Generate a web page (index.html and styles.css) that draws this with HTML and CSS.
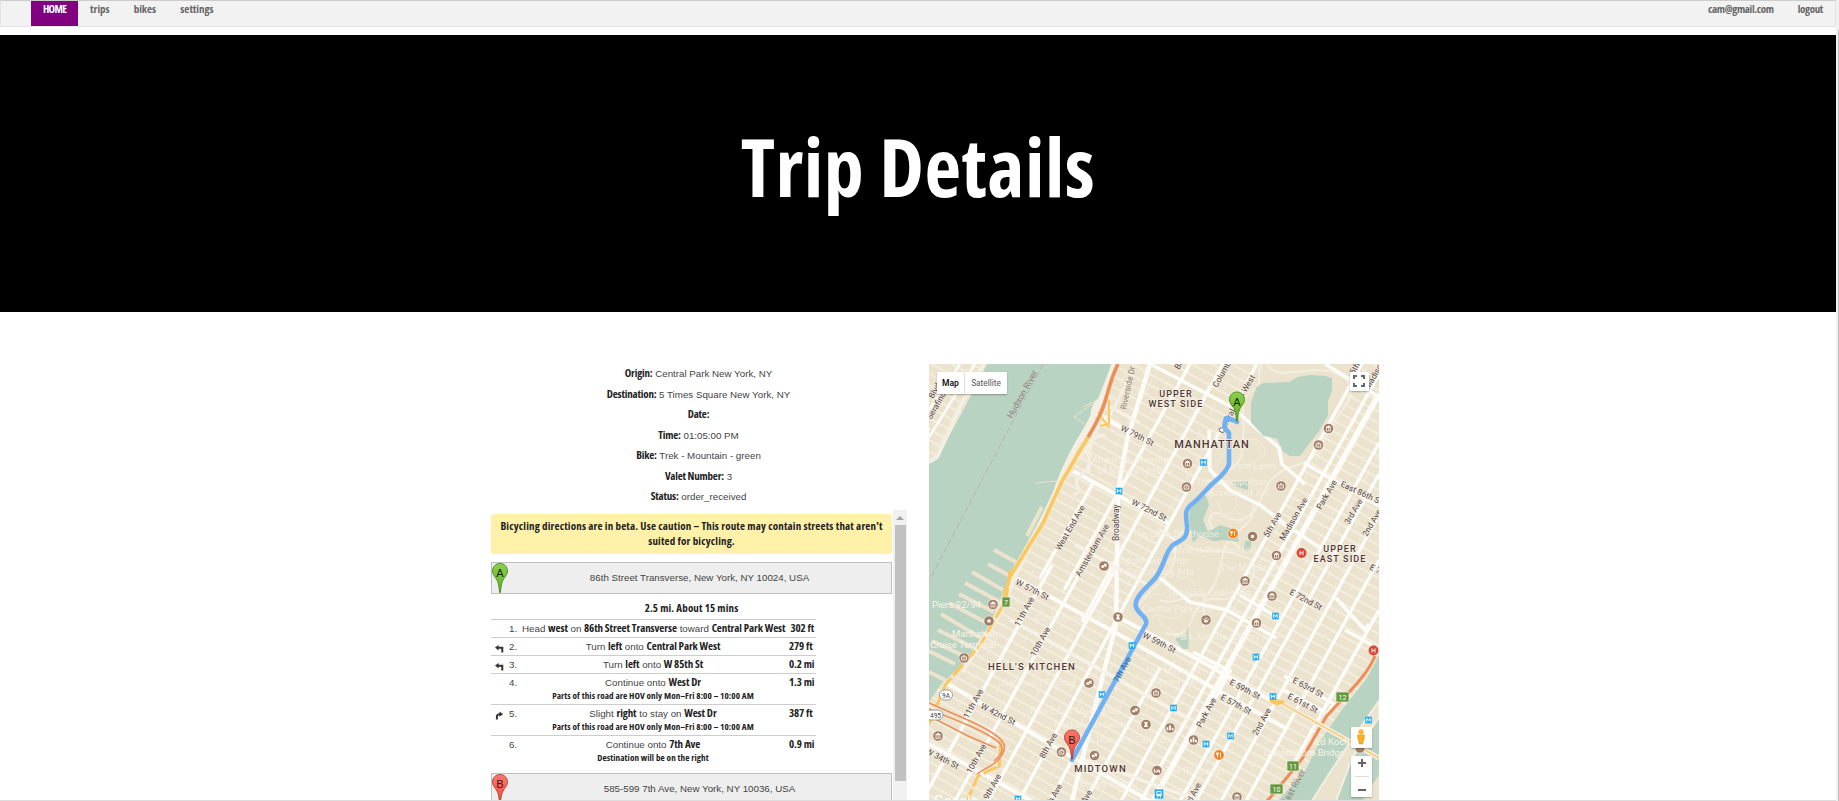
FILE: index.html
```html
<!DOCTYPE html>
<html lang="en">
<head>
<meta charset="utf-8">
<title>Trip Details</title>
<link rel="stylesheet" href="styles.css">
</head>
<body>
<div class="page">
  <nav class="nav">
    <a class="home">HOME</a><a>trips</a><a>bikes</a><a>settings</a>
    <span class="grow"></span><a class="user">cam@gmail.com</a><a class="user">logout</a>
  </nav>
  <header class="hero"><h1>Trip Details</h1></header>
  <main class="main">
    <section class="info">
      <div class="facts">
        <p><b>Origin:</b> Central Park New York, NY</p>
        <p><b>Destination:</b> 5 Times Square New York, NY</p>
        <p><b>Date:</b></p>
        <p><b>Time:</b> 01:05:00 PM</p>
        <p><b>Bike:</b> Trek - Mountain - green</p>
        <p><b>Valet Number:</b> 3</p>
        <p><b>Status:</b> order_received</p>
      </div>
      <div class="scroller">
        <div class="directions">
          <div class="warn">Bicycling directions are in beta. Use caution – This route may contain streets that aren't<br>suited for bicycling.</div>
          <div class="place"><svg class="pin" viewBox="0 0 16 30"><use href="#pinGreen"/><text x="8" y="13.5">A</text></svg><span>86th Street Transverse, New York, NY 10024, USA</span></div>
          <div class="summary">2.5 mi. About 15 mins</div>
          <div class="steps">
            <div class="step"><i></i><em>1.</em><div>Head <b>west</b> on <b>86th Street Transverse</b> toward <b>Central Park West</b></div><b class="dist">302 ft</b></div>
            <div class="step"><i><svg viewBox="0 0 10 9"><use href="#left"/></svg></i><em>2.</em><div>Turn <b>left</b> onto <b>Central Park West</b></div><b class="dist">279 ft</b></div>
            <div class="step"><i><svg viewBox="0 0 10 9"><use href="#left"/></svg></i><em>3.</em><div>Turn <b>left</b> onto <b>W 85th St</b></div><b class="dist">0.2 mi</b></div>
            <div class="step tall"><i></i><em>4.</em><div>Continue onto <b>West Dr</b><small>Parts of this road are HOV only Mon–Fri 8:00 – 10:00 AM</small></div><b class="dist">1.3 mi</b></div>
            <div class="step tall"><i><svg viewBox="0 0 10 9"><use href="#slight"/></svg></i><em>5.</em><div>Slight <b>right</b> to stay on <b>West Dr</b><small>Parts of this road are HOV only Mon–Fri 8:00 – 10:00 AM</small></div><b class="dist">387 ft</b></div>
            <div class="step tall"><i></i><em>6.</em><div>Continue onto <b>7th Ave</b><small>Destination will be on the right</small></div><b class="dist">0.9 mi</b></div>
          </div>
          <div class="place"><svg class="pin" viewBox="0 0 16 30"><use href="#pinRed"/><text x="8" y="13.5">B</text></svg><span>585-599 7th Ave, New York, NY 10036, USA</span></div>
        </div>
        <div class="bar"><span class="arrow"></span><span class="thumb"></span></div>
      </div>
    </section>
    <section class="map">
<svg class="canvas" viewBox="929 364 450 437">
<defs>
  <linearGradient id="gg" x2="0" y2="1"><stop offset="0" stop-color="#8ad04c"/><stop offset="1" stop-color="#5fae20"/></linearGradient>
  <linearGradient id="gr" x2="0" y2="1"><stop offset="0" stop-color="#ff776b"/><stop offset="1" stop-color="#f04a3c"/></linearGradient>
  <path id="pinGreen" d="M8 .5C3.700 .5.5 3.700.5 8c0 2.500 1.200 4.300 2.900 6.600C5.700 17.700 7 21 7.500 29.500h1C9 21 10.300 17.700 12.600 14.600 14.300 12.300 15.500 10.500 15.500 8c0-4.300-3.200-7.500-7.500-7.500z" fill="url(#gg)" stroke="#3f7d1a" stroke-width=".8"/>
  <path id="pinRed" d="M8 .5C3.700 .5.5 3.700.5 8c0 2.500 1.200 4.300 2.900 6.600C5.700 17.700 7 21 7.500 29.500h1C9 21 10.300 17.700 12.600 14.600 14.300 12.300 15.500 10.500 15.500 8c0-4.300-3.200-7.500-7.500-7.500z" fill="url(#gr)" stroke="#a4352b" stroke-width=".8"/>
  <path id="left" d="M0 3.500 4 .5v2h5.200V9H7V4.700H4v2z" fill="#333"/>
  <path id="slight" d="M1 9V6C1 3.500 2.500 2 5 2V0L9 3 5 6V4.200C3.800 4.200 3.200 5 3.200 6.300V9z" fill="#333"/>
  <pattern id="grid" width="32" height="9.700" patternUnits="userSpaceOnUse" patternTransform="translate(1118 617) rotate(29)">
    <path d="M0 4.800H32" stroke="#f6f1e4" stroke-width="1.600"/>
  </pattern>
  <pattern id="blocks" width="26" height="29" patternUnits="userSpaceOnUse" patternTransform="translate(1118 617) rotate(29)">
    <path d="M8 0V9.700M19 9.700V29" stroke="#f3eddf" stroke-width="1"/>
  </pattern>
  <g id="poi"><circle r="5.400" fill="#fff" opacity=".75"/><circle r="4.800" fill="#a27e66"/></g>
  <g id="museum"><use href="#poi"/><path d="M-2.500-1 0-2.700 2.500-1zM-2-.4v2.500M0-.4v2.500M2-.4v2.500M-2.600 2.400h5.200" fill="#fff" stroke="#fff" stroke-width=".7"/></g>
  <g id="cam"><use href="#poi"/><path d="M-2.400-1.200h4.800v3.300h-4.800zM-1-2.200h2" fill="none" stroke="#fff" stroke-width=".9"/><circle cy=".5" r=".6" fill="#fff"/></g>
  <g id="masks"><use href="#poi"/><path d="M-2.600-.8H.2v2.600h-2.800zM-.2-2.200H2.600V.8H.8" fill="#fff"/></g>
  <g id="dot"><use href="#poi"/><rect x="-1.600" y="-1.600" width="3.200" height="3.200" rx="1" fill="#fff"/></g>
  <g id="paw"><use href="#poi"/><ellipse cy="1.200" rx="1.800" ry="1.400" fill="#fff"/><path d="M-2.200-.6h.1M-.8-1.800h.1M.8-1.800h.1M2.200-.6h.1" stroke="#fff" stroke-width="1.200" stroke-linecap="round"/></g>
  <g id="city"><use href="#poi"/><path d="M-2.500 2.300v-3M0 2.300v-5M2.500 2.300V-.2" stroke="#fff" stroke-width="1.700"/></g>
  <g id="bed"><use href="#poi"/><path d="M-2.600-1.800v4M-2.600 1.200h5.200M2.600-.3v2.500M-.5-.3h3" fill="none" stroke="#fff" stroke-width="1.100"/></g>
  <g id="tower"><use href="#poi"/><path d="M-2 2.500h4L1-.5 2-2.500h-4l1 2z" fill="#fff"/></g>
  <g id="metro"><rect x="-3.300" y="-3.300" width="6.600" height="6.600" fill="#1eaaf1"/><path d="M-1.700 2v-3.700L0 .5l1.700-2.200V2" fill="none" stroke="#fff" stroke-width=".9"/></g>
  <g id="bus"><rect x="-4.300" y="-4.600" width="8.600" height="9.200" fill="#1eaaf1"/><rect x="-2.600" y="-3" width="5.200" height="5.200" rx=".8" fill="#fff"/><path d="M-1.700-1.900h3.400v1.800h-3.400z" fill="#1eaaf1"/><path d="M-2 3.200h1M1 3.200h1" stroke="#fff"/></g>
  <g id="food"><circle r="5.400" fill="#fff"/><circle r="4.900" fill="#f58220"/><path d="M-1.500-2.500v5M-2.500-2.500V-.5h2v-2M1.500 2.500v-5" fill="none" stroke="#fff" stroke-width=".8"/></g>
  <g id="hosp"><circle r="4.900" fill="#db4437"/><path d="M-1.500-2.200v4.400M1.500-2.200v4.400M-1.500 0h3" stroke="#fff" stroke-width=".9"/></g>
</defs>
<rect x="929" y="364" width="450" height="437" fill="#ebe3cd"/>
<rect x="929" y="364" width="450" height="437" fill="url(#grid)"/>
<rect x="929" y="364" width="450" height="437" fill="url(#blocks)"/>
<!-- central park -->
<path d="M1120 617 1256 364H1365L1201 657z" fill="#ebe3cd"/>
<g fill="none" stroke="#f4eee1" stroke-width="2">
  <path d="M1261 364c-5 12 4 20-10 28s-5 30-8 45 3 18-10 30-25 18-30 35-30 30-28 50-20 32-35 52"/>
  <path d="M1268 364c8 20 45-2 70 10s8 30-2 45-18 40-32 44-30 8-38 25-10 20-15 30-25 20-28 35-5 30-15 40 0 20-5 35"/>
  <path d="M1186 545c15 10 30 4 46 8s24 6 22 20-22 28-34 26-22 4-28 20-14 18-26 14"/>
  <path d="M1205 480c20 0 25 15 40 18s8 20-5 22-25-15-30-2 20 20 30 30M1160 600c20 8 35-15 48 0"/>
</g>
<path d="M1150 596c15-8 20 10 28-2s12 8 4 20-25-5-30 4M1210 490c20-8 35 12 22 22s-20 0-25 14M1202 440c12-10 35-4 25 10s-20 18-14 28M1170 570c8 12 20 4 24 14s-8 14-14 8M1215 500c8 6 2 12 12 14s6 12 16 8M1155 610c8 8 2 16 12 18s4 10 12 8M1243 440c14 0 22 10 14 20s-20 6-14-20M1250 440c8-4 20 8 12 18" fill="none" stroke="#f3ecdd" stroke-width="1"/>
<!-- main streets -->
<g fill="none" stroke="#fefcf8" stroke-width="3.400">
  <path d="M922 801 1052 565M955 801 1085 564M988 801 1118 564"/>
  <path d="M922 708 950 656M1040 578 1094 481M1064 590 1190 364"/>
  <path d="M1019 801 1118 617 1257 364M1082 622 1223 364M1050 801 1146 622M1085 801 1160 668"/>
  <path d="M1121 801 1379 333M1141 801 1379 374M1180 801 1379 443M1196 801 1379 474M1221 801 1379 515M1246 801 1379 560M1290 770 1379 610"/>
  <path d="M1153 801 1379 394" stroke-width="5.500"/>
  <path d="M1150 364 1127 440 1118 490 1116 625 1103 675 1072 801" stroke-width="4.500"/>
  <path d="M929 744 1032 801M948 684 1072 757 1150 801M1012 576 1118 634 1213 688 1285 728M1118 617 1195 658 1276 703M1073 471 1170 524M1092 411 1150 444" stroke-width="4.200"/>
  <path d="M1150 364 1230 406 1270 440 1279 448 1282 464 1305 484M1209 430 1210 470 1230 490 1260 505 1285 524 1320 548M1325 364 1379 397M1304 463 1379 506M1160 578 1190 602 1227 610 1276 638M1240 595 1280 619M1336 598 1365 630 1369 624M1345 630 1372 645" stroke-width="3.600"/>
  <path d="M1284 676 1334 704 1327 714M1284 690 1325 712M1193 652 1230 671 1205 718" stroke-width="3.600"/>
  <path d="M1075 545 1150 586M1010 620 1190 720M1060 380 1140 423M1085 760 1200 801M1160 530 1180 543" stroke="#f7f3e8" stroke-width="3"/>
</g>
<!-- water -->
<path d="M987 364H1117L1083 430 1060 475 1045 510 1014 566 1000 600 985 635 965 662 941 684 929 702V462L940 453 965 407z" fill="#b9d3c2"/>
<g stroke="#ebe3cd" stroke-width="4" fill="none">
  <path d="M1042 507 1027 536M1016 562 994 550M1010 576 988 564M1003 590 972 572M1000 602 965 583M994 612 959 594M985 622 949 603M981 638 941 614M974 648 938 630M966 657 932 641M955 664 929 651M945 680 929 672"/>
  <path d="M1057 481 1035 483M1092 404 1074 417 1084 424M1098 400 1082 407" stroke-width="1"/>
</g>
<path d="M984 364 961 405 937 457 929 462" fill="none" stroke="#f4efe3" stroke-width="4"/>
<path d="M975 364 929 437M960 364 929 410" fill="none" stroke="#fefcf8" stroke-width="2.500"/>
<path d="M1257 388 1263 384 1289 383 1298 378 1310 376 1325 377 1331 379 1331 391 1327 401 1327 415 1318 431 1304 449 1299 455 1290 455 1284 451 1278 438 1264 435 1252 422 1252 403z" fill="#b9d3c2" stroke="#b9d3c2" stroke-width="2" stroke-linejoin="round"/>
<path d="M1191 504 1206 495 1209 505 1203 520 1208 532 1220 525 1236 530 1239 542 1225 540 1213 541 1200 535 1193 543 1189 520 1190 505zM1232 482 1248 481 1248 490 1237 487zM1245 541 1252 540 1250 550 1244 551zM1174 638 1186 636 1187 625 1189 637 1188 649 1183 649z" fill="#b9d3c2"/>
<path d="M1379 655 1367 678 1341 711 1319 743 1305 771 1278 801H1379z" fill="#b9d3c2"/>
<path d="M1379 717 1352 758 1336 801H1312L1327 777 1355 735 1379 701z" fill="#ebe3cd" stroke="#f4efe3" stroke-width="2"/>
<path d="M1379 775 1362 801H1379z" fill="#ebe3cd"/>
<path d="M1114 364C1102 397 1095 415 1083 434S1060 478 1055 494L1015 576 999 614 962 672" stroke="#f4efe3" stroke-width="5" fill="none"/>
<path d="M1098 400c-12 14 0 22-12 35s15 22-3 38 8 14-10 22M1105 435c-18 0-20 30-34 22M1129 379c-15 24-14 34-26 44-15 12-13 32-14 50" stroke="#f4efe3" stroke-width="3" fill="none"/>
<path d="M1088 437 1062 481 1043 523 1010 577 1003 600" stroke="#fbc75f" stroke-width="3.600" fill="none"/>
<path d="M1098 412 1109 428M1109 400V424L1100 426" stroke="#fbc75f" stroke-width="2" fill="none"/>
<path d="M1118 364C1105 390 1110 402 1088 437" stroke="#ed8d58" stroke-width="3.600" fill="none"/>
<path d="M1010 570 1006 600 980 645 946 684 929 724M997 767 978 776 967 801M1001 740 999 768" stroke="#fbc75f" stroke-width="3" stroke-dasharray="15 3" fill="none"/>
<g fill="none" stroke="#ed8d58" stroke-width="1.500"><path d="M929 703 970 721C1007 738 1012 747 996 762 989 768 982 770 977 774M929 709 970 726C1005 742 1009 748 994 761M929 716 968 736 996 748"/></g>
<path d="M1375 656C1365 680 1340 700 1326 717L1302 759 1275 792 1267 801" stroke="#ed8d58" stroke-width="3" fill="none"/>
<path d="M1276 700 1379 758" stroke="#f3ecdd" stroke-width="5"/><path d="M1276 700 1379 758" stroke="#fbc75f" stroke-width="1.300"/>
<path d="M1270 700 1284 702 1276 704z" stroke="#fbc75f" stroke-width="3" fill="#fbc75f"/>
<path d="M1043 364 929 581" stroke="#b3aaa9" stroke-width=".8" stroke-dasharray="6 3"/>
<!-- faint labels -->
<g class="faint">
  <text x="932" y="608" class="w">Piers 92/94</text><text x="952" y="637" class="w">Manhattan</text><text x="930" y="648" class="w">Cruise Terminal</text>
  <text x="1092" y="463">American Museum</text><text x="1098" y="474">of Natural History</text><text x="1228" y="469">Great Lawn</text><text x="1196" y="485">The Metropolitan</text><text x="1205" y="496">Museum of Art</text><text x="1132" y="537">The Loeb Boathouse</text><text x="1172" y="553">Alice in Wonderland</text><text x="1113" y="564">Lincoln Center for</text><text x="1111" y="575">the Performing Arts</text><text x="1220" y="571">The Met Breuer</text><text x="1167" y="596">The Frick Collection</text><text x="1142" y="612">Central Park Zoo</text><text x="1174" y="640">Park Avenue Armory</text><text x="1035" y="621">Columbus Circle</text><text x="1002" y="686">Gershwin Theatre</text><text x="1030" y="714">Radio City Music Hall</text><text x="1054" y="728">Rockefeller Center</text><text x="1083" y="743">St. Patrick's Cathedral</text><text x="1080" y="787">Bryant Park</text><text x="1145" y="674">The Museum</text><text x="1143" y="685">of Modern Art</text><text x="1165" y="774">The Roosevelt</text><text x="1315" y="745" class="w">Ed Koch</text><text x="1264" y="756" class="w">Queensboro Bridge</text><text x="934" y="806" class="google">Google</text>
</g>
<!-- stations and places -->
<use href="#metro" x="1119" y="491"/><use href="#metro" x="1203.500" y="462.500"/><use href="#metro" x="1102" y="694.500"/><use href="#metro" x="1275.500" y="616"/><use href="#metro" x="1256" y="657"/><use href="#metro" x="1273" y="696.500"/><use href="#metro" x="1173.500" y="708"/><use href="#metro" x="1230.500" y="736"/><use href="#metro" x="1206" y="744"/><use href="#metro" x="1368.500" y="720"/><use href="#metro" x="1018" y="799"/><use href="#bus" x="1159" y="794"/>
<use href="#masks" x="1104" y="566"/><use href="#museum" x="1187.500" y="463.500"/><use href="#cam" x="1186.500" y="487"/><use href="#museum" x="1328.500" y="428.500"/><use href="#cam" x="1318.500" y="445"/><use href="#cam" x="1281" y="486"/><use href="#museum" x="1276.500" y="555.500"/><use href="#dot" x="1252.500" y="536.500"/><use href="#museum" x="1245" y="581"/><use href="#museum" x="1272" y="596"/><use href="#museum" x="1256.500" y="623"/><use href="#paw" x="1206" y="620"/><use href="#museum" x="993" y="604.500"/><use href="#dot" x="989" y="621"/><use href="#cam" x="964" y="658"/><use href="#tower" x="1118" y="617"/><use href="#masks" x="1089" y="683"/><use href="#cam" x="1156" y="693"/><use href="#masks" x="1135" y="710.500"/><use href="#tower" x="1146" y="724.500"/><use href="#city" x="1170" y="728"/><use href="#city" x="1193.500" y="740"/><use href="#cam" x="1061.500" y="752"/><use href="#masks" x="1094.500" y="755.500"/><use href="#bed" x="1157" y="770.500"/><use href="#museum" x="1237" y="797"/><use href="#museum" x="938" y="736"/><use href="#poi" x="1360" y="748"/>
<use href="#food" x="1233" y="533.500"/><use href="#food" x="1219" y="755"/><use href="#hosp" x="1301.500" y="553"/><use href="#hosp" x="1373.500" y="650.500"/>
<g class="exit"><rect x="1002" y="597" width="8" height="10"/><text x="1006" y="605">7</text><rect x="1336" y="692" width="13" height="10"/><text x="1342.500" y="700">12</text><rect x="1287" y="761" width="12" height="10"/><text x="1293" y="769">11</text><rect x="1270" y="784" width="13" height="10"/><text x="1276.500" y="792">10</text></g>
<g class="shield"><rect x="939.500" y="690" width="13" height="10" rx="5"/><text x="946" y="697.500">9A</text><rect x="926" y="710" width="17" height="10" rx="5"/><text x="935.500" y="717.500">495</text></g>
<g class="street">
  <text transform="translate(1120 430) rotate(27)">W 79th St</text><text transform="translate(1131 504) rotate(27)">W 72nd St</text><text transform="translate(1015 584) rotate(27)">W 57th St</text><text transform="translate(1142 637) rotate(27)">W 59th St</text><text transform="translate(980 708) rotate(27)">W 42nd St</text><text transform="translate(925 753) rotate(27)">W 34th St</text>
  <text transform="translate(1289 594) rotate(28)">E 72nd St</text><text transform="translate(1292 682) rotate(28)">E 63rd St</text><text transform="translate(1287 698) rotate(28)">E 61st St</text><text transform="translate(1229 684) rotate(28)">E 59th St</text><text transform="translate(1220 699) rotate(28)">E 57th St</text><text transform="translate(1340 486) rotate(25)">East 86th St</text><text transform="translate(1369 569) rotate(27)">E 75th St</text>
  <text transform="translate(1060 551) rotate(-60)">West End Ave</text><text transform="translate(1080 577) rotate(-60)">Amsterdam Ave</text><text transform="translate(1119 541) rotate(-90)">Broadway</text>
  <text transform="translate(1019 627) rotate(-61)">11th Ave</text><text transform="translate(968 719) rotate(-61)">11th Ave</text><text transform="translate(1035 657) rotate(-61)">10th Ave</text><text transform="translate(971 774) rotate(-61)">10th Ave</text><text transform="translate(988 800) rotate(-61)">9th Ave</text><text transform="translate(1044 759) rotate(-61)">8th Ave</text><text transform="translate(1049 810) rotate(-61)">7th Ave</text><text transform="translate(1079 816) rotate(-61)">6th Ave</text>
  <text transform="translate(1268 538) rotate(-60)">5th Ave</text><text transform="translate(1284 541) rotate(-60)">Madison Ave</text><text transform="translate(1321 510) rotate(-60)">Park Ave</text><text transform="translate(1349 525) rotate(-60)">3rd Ave</text><text transform="translate(1367 537) rotate(-60)">2nd Ave</text><text transform="translate(1201 728) rotate(-61)">Park Ave</text><text transform="translate(1257 736) rotate(-61)">2nd Ave</text><text transform="translate(1188 809) rotate(-61)">3rd Ave</text>
  <text transform="translate(1217 388) rotate(-60)">Columbus Ave</text><text transform="translate(1179 370) rotate(-60)">Broadway</text><text transform="translate(1223 434) rotate(-62)">Central Park</text><text transform="translate(1246 393) rotate(-60)">West</text><text transform="translate(1126 410) rotate(-78)" class="minor">Riverside Dr</text><text transform="translate(1012 419) rotate(-61)" class="minor river">Hudson River</text><text transform="translate(1287 806) rotate(-62)" class="minor river">East River</text><text transform="translate(1354 375) rotate(-60)">5th Ave</text><text transform="translate(1369 390) rotate(-60)">Madison Ave</text><text transform="translate(933 399) rotate(-60)">Blvd E</text><text transform="translate(931 420) rotate(-60)">Serafino</text>
</g>
<!-- route -->
<path d="M1237 422 1233 420 1226 418 1224 427 1229 433 1229 464C1227 473 1216 480 1211 485S1200 498 1192 504 1186 515 1187 526C1188 540 1180 540 1173 545S1165 564 1156 577C1150 585 1133 597 1136 607 1138 614 1148 617 1146 624L1072 760" fill="none" stroke="#70b1f4" stroke-width="4.600" stroke-linejoin="round" stroke-linecap="round"/>
<use href="#metro" x="1132" y="645.500"/>
<g class="street over"><text transform="translate(1118 683) rotate(-61)">7th Ave</text></g>
<g class="district"><text x="1176" y="396.500">UPPER</text><text x="1176" y="406.500">WEST SIDE</text><text x="1340" y="552">UPPER</text><text x="1340" y="561.500">EAST SIDE</text><text x="1212" y="447.500" class="big">MANHATTAN</text><text x="1032" y="670" class="mid">HELL'S KITCHEN</text><text x="1100.500" y="772" class="mid">MIDTOWN</text></g>
<g class="pins"><use href="#pinGreen" x="1229" y="391.500"/><text x="1237" y="405.500">A</text><use href="#pinRed" x="1064" y="729.500"/><text x="1072" y="743.500">B</text></g>
</svg>
      <div class="types"><b>Map</b><span>Satellite</span></div>
      <div class="full"><svg viewBox="0 0 12 12"><path d="M1 4V1h3M8 1h3v3M11 8v3H8M4 11H1V8" fill="none" stroke="#666" stroke-width="2"/></svg></div>
      <div class="man"><svg viewBox="0 0 12 18"><circle cx="6" cy="4" r="2.700" fill="#fbb72f"/><path d="M2.500 7h7l-.5 5H8.300L8 16H4l-.3-4H3z" fill="#f8b026" stroke="#d8931b" stroke-width=".5"/></svg></div>
      <div class="zoom"><span class="plus"></span><hr><span class="minus"></span></div>
    </section>
  </main>
  <div class="edge"></div>
  <div class="pagebar"></div>
</div>
</body>
</html>
```
FILE: styles.css
```css
* { box-sizing: border-box; }
body { margin: 0; background: #fff; overflow: hidden; font: 9.75px/13px "Liberation Sans", Arial, sans-serif; color: #444; }
.page { position: relative; height: 801px; width: 1839px; overflow: hidden; }
b, .nav, h1, .warn, .summary, small { font-family: "Liberation Sans Narrow", "Open Sans", sans-serif; font-stretch: 75%; font-weight: 700; }
.nav { display: flex; width: 1836px; height: 27px; padding-left: 30px; background: #f2f2f2; border: 1px solid #e4e4e4; border-top-color: #ccc; color: #666; font-size: 11px; }
.nav a { padding: 1px 12px 0; height: 25px; }
.nav .home { background: #800080; color: #fff; letter-spacing: -.75px; }
.nav .user { letter-spacing: -.35px; }
.grow { flex: 1; }
.hero { margin-top: 8px; width: 1836px; height: 277px; padding-bottom: 15px; background: #000; color: #fff; display: flex; justify-content: center; align-items: center; }
h1 { margin: 0; font-size: 80px; line-height: 100px; letter-spacing: .5px; }
.main { display: flex; width: 1836px; padding-left: 491px; }
.info { width: 416px; margin-right: 22px; }
.facts { padding-top: 51px; height: 198px; text-align: center; }
.facts p { margin: 0; padding-right: 1px; height: 20.500px; line-height: 20.500px; }
.facts b { font-size: 11px; color: #222; letter-spacing: -.2px; }
.scroller { display: flex; height: 291px; overflow: hidden; }
.directions { width: 401px; padding-top: 4px; margin-right: 1px; }
.warn { height: 40px; padding-top: 4px; background: #fff1a8; border-radius: 2px; text-align: center; color: #222; font-size: 11px; line-height: 15px; letter-spacing: .16px; white-space: nowrap; }
.place { display: flex; height: 32px; margin-top: 8px; background: #eee; border: 1px solid #c0c0c0; align-items: center; }
.place span { flex: 1; text-align: center; padding-bottom: 1px; }
.pin { width: 16px; height: 30px; }
.pin text, .pins text { font: 11px "Liberation Sans", sans-serif; text-anchor: middle; fill: #222; }
.summary { height: 25px; line-height: 27px; text-align: center; font-size: 11px; color: #222; letter-spacing: .12px; }
.steps { width: 325px; height: 146px; }
.step { display: flex; height: 18px; border-top: 1px solid #cdcdcd; padding-top: 2px; }
.step.tall { height: 31px; }
.step i { flex: none; width: 18px; padding: 4px 0 0 4px; line-height: 0; }
.step i svg { width: 9px; height: 9px; }
.step em { flex: none; font-style: normal; width: 13px; }
.step div { flex: 1; display: block; text-align: center; white-space: nowrap; }
.step b { font-size: 11px; line-height: 12px; color: #222; letter-spacing: -.1px; }
.step .dist { flex: none; width: 32px; padding-left: 5px; }
small { display: block; font-size: 9.200px; line-height: 13px; letter-spacing: .08px; color: #222; }
.bar { width: 14px; background: #f1f1f1; display: flex; flex-direction: column; align-items: center; }
.arrow { border: 4px solid transparent; border-top: 0; border-bottom-color: #a3a3a3; margin: 6px 0 5px; }
.thumb { width: 11px; height: 256px; background: #c1c1c1; }
.map { position: relative; width: 450px; height: 437px; margin-top: 52px; overflow: hidden; }
.canvas { display: block; width: 450px; height: 437px; }
.street text { font: 8.300px Roboto, sans-serif; fill: #55433f; stroke: #f5f1e6; stroke-width: 1px; paint-order: stroke; }
.street .minor { fill: #93817c; stroke: none; }
.street .river { font-size: 9px; }
.over text { fill: #245b9c; stroke: none; }
.district text { font: 500 9px Roboto, sans-serif; letter-spacing: 1.100px; text-anchor: middle; fill: #523735; stroke: #f5f1e6; stroke-width: 1.500px; paint-order: stroke; }
.district .big { font-size: 11px; letter-spacing: .9px; }
.district .mid { font-size: 9.500px; letter-spacing: 1.200px; }
.faint text { font: 9.500px Roboto, sans-serif; fill: #f8f4e8; opacity: .8; }
.faint .w { opacity: 1; }
.faint .google { font-size: 14px; fill: #fff; opacity: 1; }
.exit rect { fill: #66993f; stroke: #eaf0dd; stroke-width: .7; }
.exit text { font: 7px Roboto, sans-serif; fill: #fff; text-anchor: middle; }
.shield rect { fill: #fff; stroke: #888; stroke-width: .8; }
.shield text { font: 6.500px Roboto, sans-serif; fill: #444; text-anchor: middle; }
.types, .full, .man, .zoom { position: absolute; background: #fff; border-radius: 1px; box-shadow: 0 1px 2px rgba(0,0,0,.3); }
.types { left: 8px; top: 8px; width: 70px; height: 22px; display: flex; font: 8.300px/22px Roboto, sans-serif; color: #565656; }
.types b { width: 28px; font: 500 8.500px/22px Roboto, sans-serif; color: #000; text-align: center; border-right: 1px solid #ddd; }
.types span { flex: 1; text-align: center; }
.full { left: 421px; top: 8px; width: 19px; height: 19px; padding: 3px; line-height: 0; }
.full svg { width: 12px; height: 12px; }
.man { left: 422px; top: 363px; width: 21px; height: 21px; padding: 1px 4px; }
.man svg { width: 12px; height: 18px; display: block; }
.zoom { left: 422px; top: 392px; width: 21px; height: 41px; display: flex; flex-direction: column; align-items: center; justify-content: space-around; }
.zoom hr { width: 14px; height: 1px; margin: 0; border: 0; background: #ddd; }
.plus, .minus { width: 8px; height: 2px; background: #666; position: relative; }
.plus::after { content: ""; position: absolute; left: 3px; top: -3px; width: 2px; height: 8px; background: #666; }
.edge { position: absolute; left: 0; top: 800px; width: 1839px; height: 1px; background: #ddd; }
.pagebar { position: absolute; left: 1836px; top: 0; width: 3px; height: 801px; background: linear-gradient(90deg, #f1f1f1 2px, #c1c1c1 2px); border-top: 30px solid #f1f1f1; }
```
